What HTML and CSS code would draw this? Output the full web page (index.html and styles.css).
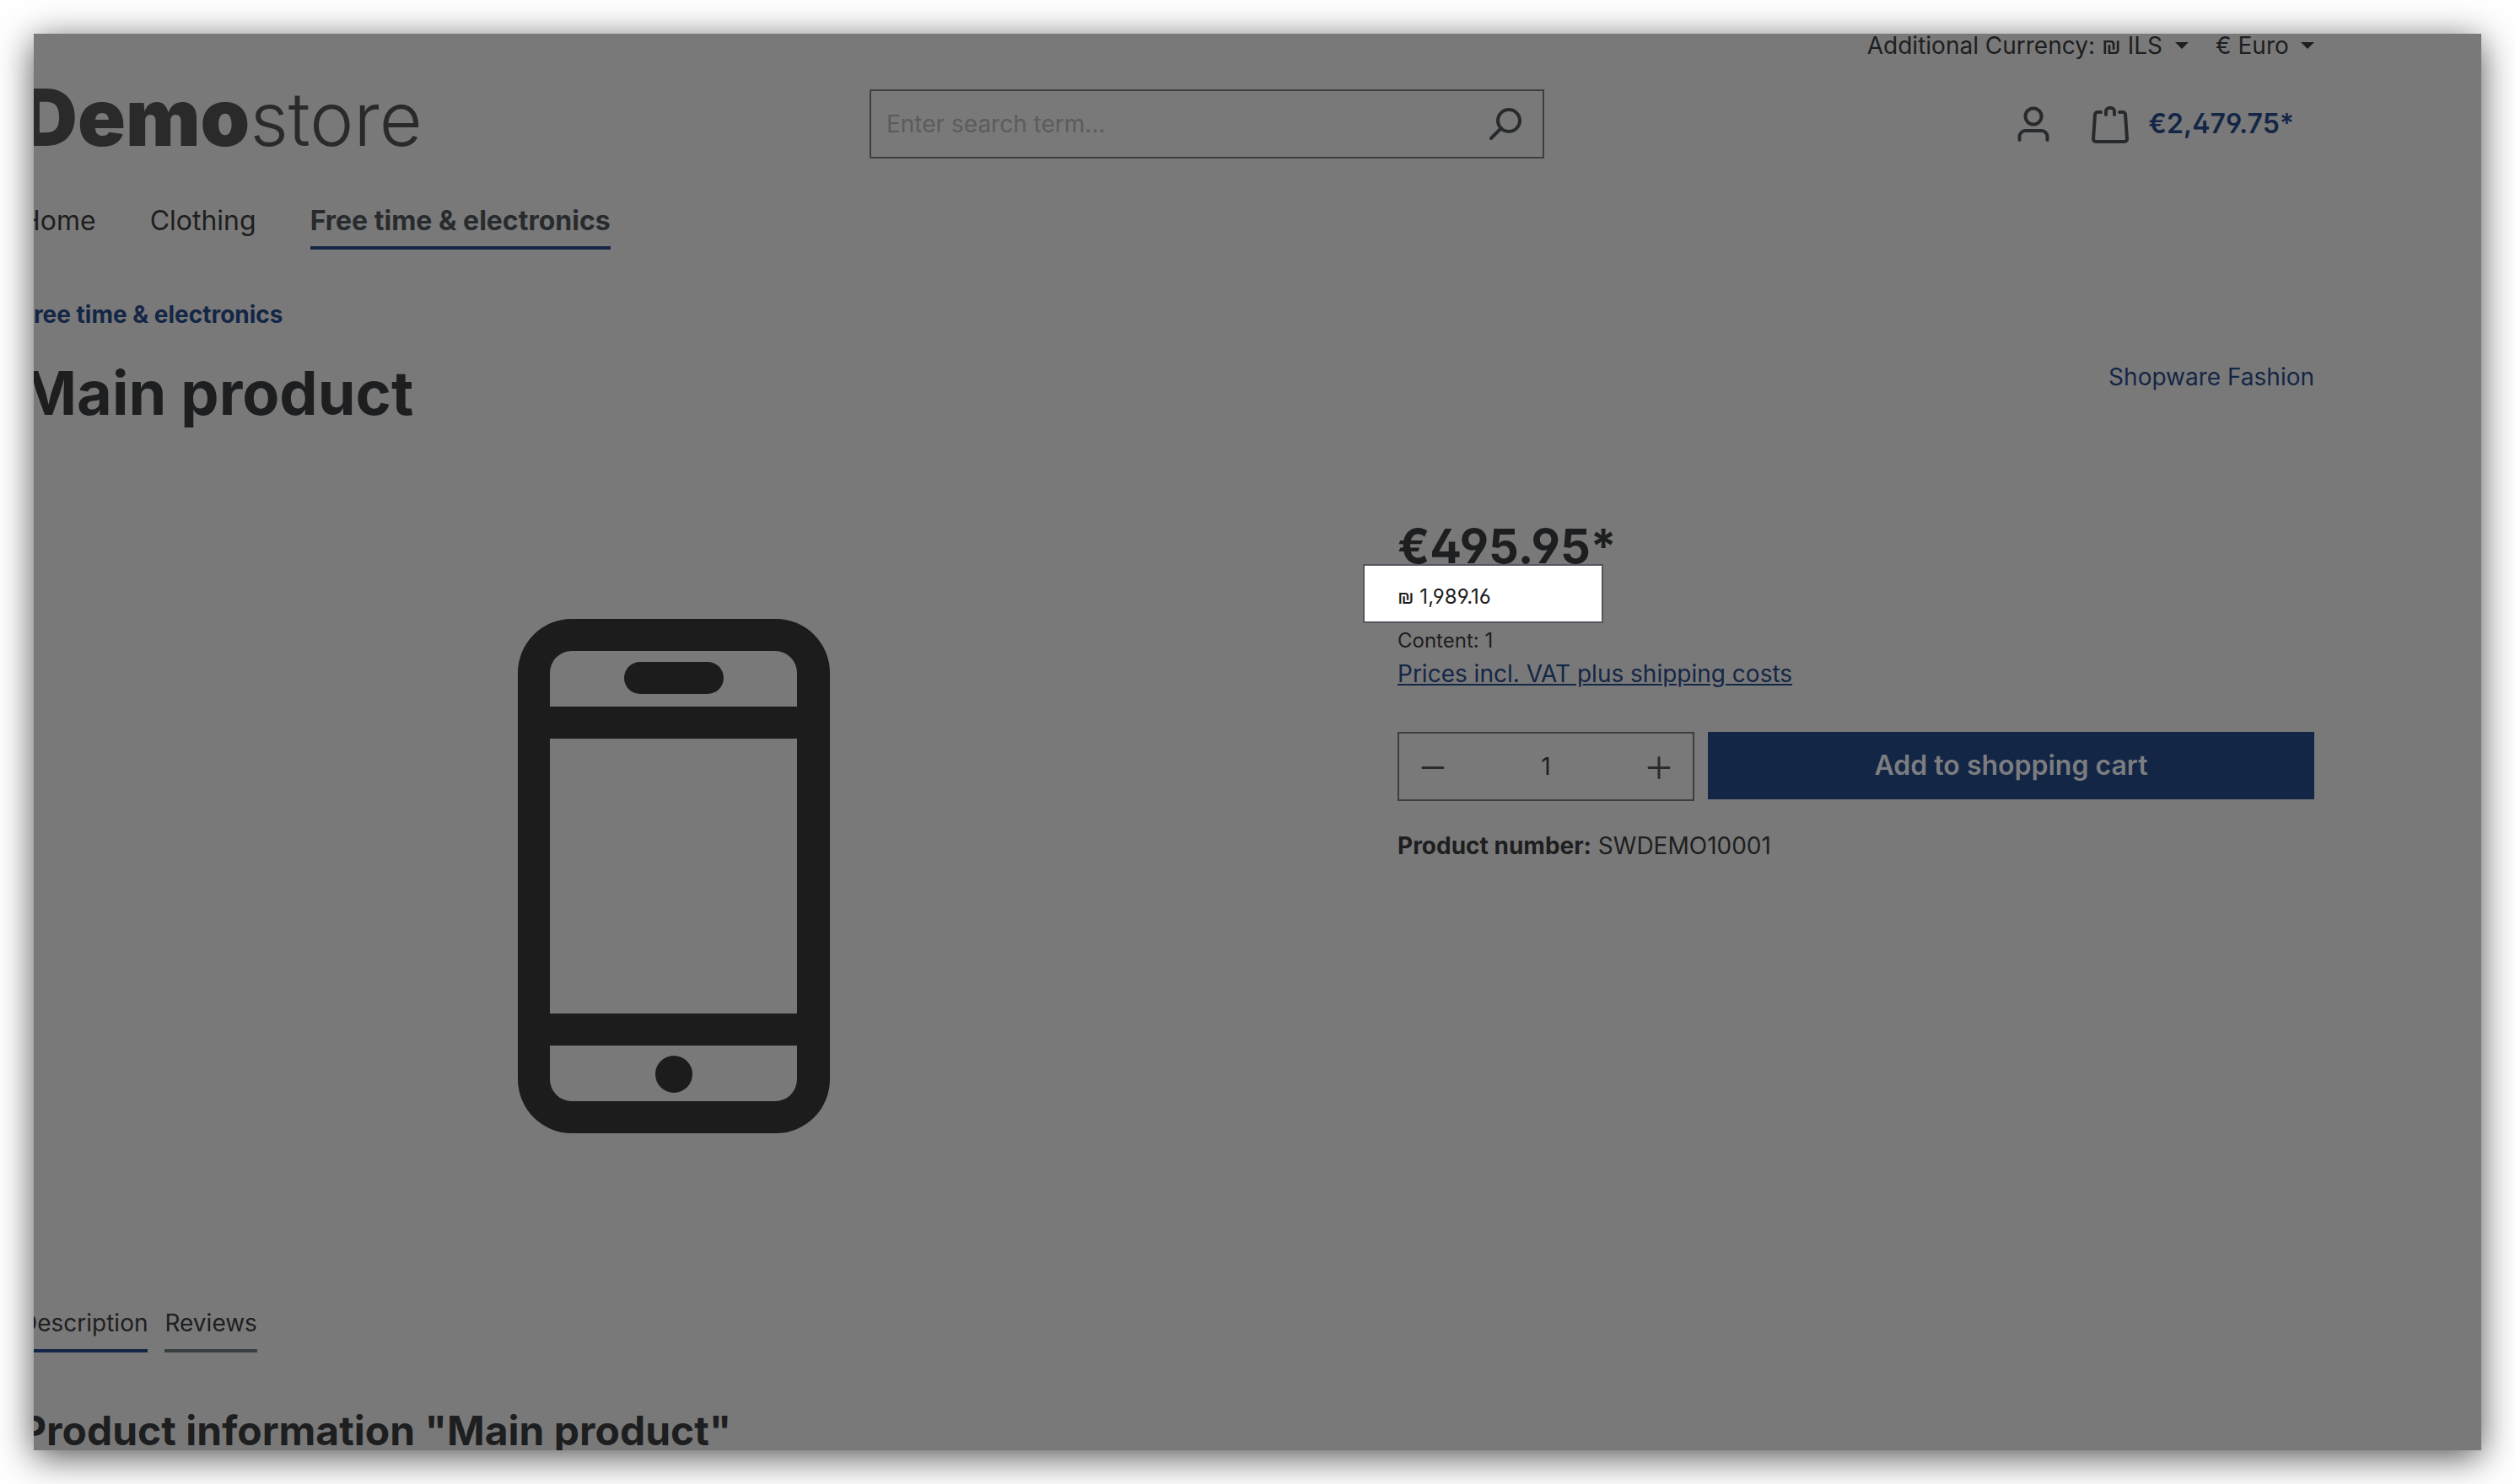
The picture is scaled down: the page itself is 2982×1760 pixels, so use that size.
FILE: index.html
```html
<!DOCTYPE html>
<html lang="en">
<head>
<meta charset="utf-8">
<meta name="viewport" content="width=device-width, initial-scale=1">
<title>Main product | Demostore</title>
<link rel="stylesheet" href="styles.css">
</head>
<body>
<div class="window">
  <div class="container">
    <div class="top-bar">
      <div class="picker">
        <label for="additional-currency">Additional Currency:</label>
        <select id="additional-currency"><option>₪ ILS</option></select>
        <span class="caret"></span>
      </div>
      <div class="picker">
        <select id="currency" aria-label="Currency"><option>€ Euro</option></select>
        <span class="caret"></span>
      </div>
    </div>

    <header class="header">
      <a class="logo" href="#"><b>Demo</b><span>store</span></a>
      <form class="search">
        <input type="search" placeholder="Enter search term..." aria-label="Search">
        <button type="button" aria-label="Search">
          <svg width="40" height="40" viewBox="0 0 40 40"><circle cx="24" cy="16" r="13"/><path d="M15 25 3 37"/></svg>
        </button>
      </form>
      <div class="actions">
        <a class="account" href="#" aria-label="Your account">
          <svg width="40" height="44" viewBox="0 0 40 44"><circle cx="20" cy="13" r="9.5"/><path d="M3.500 41v-4a7 7 0 0 1 7-7h19a7 7 0 0 1 7 7v4"/></svg>
        </a>
        <a class="cart" href="#">
          <svg width="46" height="46" viewBox="0 0 46 46"><path d="M12 9H8a3 3 0 0 0-3 3L3 41a3 3 0 0 0 3 3h34a3 3 0 0 0 3-3L41 12a3 3 0 0 0-3-3h-4"/><path d="M18 12V8a4 4 0 0 1 4-4h2a4 4 0 0 1 4 4v4"/></svg>
          <span>€2,479.75*</span>
        </a>
      </div>
    </header>

    <nav class="nav">
      <a href="#">Home</a>
      <a href="#">Clothing</a>
      <a class="active" href="#">Free time &amp; electronics</a>
    </nav>

    <main>
      <a class="breadcrumb" href="#">Free time &amp; electronics</a>
      <div class="title-row">
        <h1>Main product</h1>
        <a href="#">Shopware Fashion</a>
      </div>

      <div class="product">
        <div class="gallery">
          <svg width="370" height="610" viewBox="0 0 370 610" role="img" aria-label="Mobile phone">
            <path fill-rule="evenodd" d="M64 0H306A64 64 0 0 1 370 64V546A64 64 0 0 1 306 610H64A64 64 0 0 1 0 546V64A64 64 0 0 1 64 0ZM64 38A26 26 0 0 0 38 64V104H331V64A26 26 0 0 0 305 38ZM38 142V468H331V142ZM38 506V546A26 26 0 0 0 64 572H305A26 26 0 0 0 331 546V506Z"/>
            <rect x="126" y="51" width="118" height="38" rx="19"/>
            <circle cx="185" cy="540" r="22"/>
          </svg>
        </div>
        <div class="buy">
          <p class="price">€495.95*</p>
          <p class="converted">₪ 1,989.16</p>
          <p class="unit">Content: 1</p>
          <a class="tax" href="#">Prices incl. VAT plus shipping costs</a>
          <form class="buy-row">
            <div class="quantity">
              <button type="button" aria-label="Decrease quantity"><svg width="32" height="32" viewBox="0 0 32 32"><path d="M4 17.500h24"/></svg></button>
              <input type="text" value="1" aria-label="Quantity">
              <button type="button" aria-label="Increase quantity"><svg width="32" height="32" viewBox="0 0 32 32"><path d="M4 17.500h24M16 5.500v24"/></svg></button>
            </div>
            <button class="add" type="button">Add to shopping cart</button>
          </form>
          <p class="number"><b>Product number:</b> SWDEMO10001</p>
        </div>
      </div>

      <div class="tabs">
        <a class="active" href="#">Description</a>
        <a href="#">Reviews</a>
      </div>
      <h2>Product information "Main product"</h2>
    </main>
  </div>
</div>
</body>
</html>
```
FILE: styles.css
```css
:root {
  --surface: #797979;
  --text: #1d1e20;
  --muted: #282b2e;
  --line: #3b3f43;
  --brand: #142646;
}

* { box-sizing: border-box; }

body {
  margin: 0;
  padding: 40px;
  background: #fff;
  color: var(--text);
  font: 28px/42px Inter, "Liberation Sans", sans-serif;
  font-feature-settings: "ss01";
}

h1, h2, p { margin: 0; }
a { color: inherit; text-decoration: none; }
svg { display: block; }

input, select, button {
  margin: 0;
  padding: 0;
  border: 0;
  border-radius: 0;
  background: none;
  color: inherit;
  font: inherit;
  appearance: none;
}

/* The shop page runs slightly past the left edge of the window */
.window {
  height: calc(100vh - 80px);
  overflow: hidden;
  background: var(--surface);
  box-shadow: 0 8px 40px rgba(0, 0, 0, .68);
}

.container { margin: 0 198px 0 -16px; }

/* Top bar */
.top-bar {
  display: flex;
  justify-content: flex-end;
  gap: 32px;
  line-height: 28px;
}

.picker { display: flex; align-items: center; }
.picker select { line-height: 28px; }
.picker label { margin-right: 8px; }

.caret {
  margin-left: 14px;
  border: 8px solid transparent;
  border-top-color: var(--text);
  border-bottom: 0;
}

/* Header */
.header {
  display: grid;
  grid-template-columns: 1007fr 800px 913fr;
  margin-top: 38px;
}

.logo {
  align-self: start;
  color: #2a2a2a;
  font-size: 94px;
  line-height: 66px;
  font-weight: 300;
}
.logo b { font-weight: 900; }
.logo span { font-size: 88px; }

.search {
  display: flex;
  align-items: center;
  height: 82px;
  padding: 0 24px 0 18px;
  border: 2px solid var(--line);
}
.search input { flex: 1; min-width: 0; }
.search input::placeholder { color: #5b5c5e; opacity: 1; }

.search svg, .actions svg, .quantity svg {
  fill: none;
  stroke: var(--muted);
  stroke-width: 4;
  stroke-linecap: round;
  stroke-linejoin: round;
}

.actions {
  display: flex;
  align-items: center;
  justify-content: flex-end;
  gap: 48px;
  padding-right: 24px;
}
.cart {
  display: flex;
  align-items: center;
  gap: 22px;
  color: var(--brand);
  font-size: 32px;
  font-weight: 600;
}

/* Main navigation */
.nav {
  display: flex;
  gap: 64px;
  margin-top: 50px;
  font-size: 32px;
  line-height: 48px;
}
.nav a { padding-bottom: 6px; border-bottom: 4px solid transparent; }
.nav .active {
  border-color: var(--brand);
  color: var(--muted);
  font-weight: 700;
}

/* Product page */
.breadcrumb {
  display: block;
  margin-top: 56px;
  color: var(--brand);
  font-weight: 700;
}

.title-row {
  display: flex;
  justify-content: space-between;
  margin-top: 28px;
  color: var(--brand);
}
.title-row a { padding-top: 4px; }

h1 {
  color: var(--text);
  font-size: 72px;
  line-height: 88px;
  font-weight: 700;
}

.product {
  display: grid;
  grid-template-columns: 1553fr 1087fr;
  column-gap: 80px;
  margin-top: 110px;
}

.gallery {
  display: flex;
  justify-content: center;
  padding: 114px 4px 0 0;
}
.gallery svg { fill: #1c1c1c; }

.price {
  font-size: 56px;
  line-height: 56px;
  font-weight: 700;
}

.converted {
  position: relative;
  width: 285px;
  margin: -7px 0 0 -41px;
  padding: 19px 0 11px 39px;
  border: 2px solid #555560;
  background: #fff;
  font-size: 24px;
  line-height: 36px;
}

.unit {
  margin-top: 3px;
  font-size: 24px;
  line-height: 36px;
}

.tax {
  display: block;
  color: var(--brand);
  text-decoration: underline;
}

.buy-row {
  display: flex;
  align-items: flex-start;
  gap: 16px;
  margin-top: 48px;
}

.quantity {
  display: flex;
  align-items: center;
  justify-content: space-between;
  width: 352px;
  height: 82px;
  padding: 0 24px;
  border: 2px solid var(--line);
}
.quantity svg { stroke-width: 3; }
.quantity input { width: 80px; text-align: center; }

.add {
  flex: 1;
  height: 80px;
  background: var(--brand);
  color: #7b7d80;
  font-size: 32px;
  font-weight: 600;
}

.number { margin-top: 32px; }

.tabs {
  display: flex;
  gap: 20px;
  margin-top: 204px;
}
.tabs a { padding-bottom: 10px; border-bottom: 4px solid #394042; }
.tabs .active { border-color: var(--brand); }

h2 {
  margin-top: 61px;
  font-size: 48px;
  line-height: 64px;
  font-weight: 700;
}
```
